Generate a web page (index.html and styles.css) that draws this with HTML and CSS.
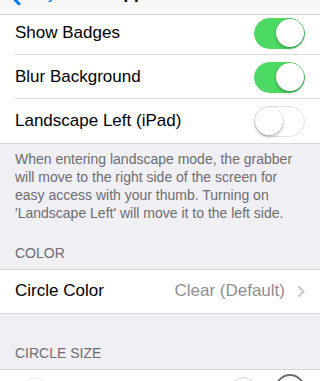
FILE: index.html
```html
<!DOCTYPE html>
<html>
<head>
<meta charset="utf-8">
<link rel="stylesheet" href="styles.css">
</head>
<body>
<div class="nav">
  <div class="back">
    <svg class="chev" width="13" height="22" viewBox="0 0 13 22"><path d="M11 1 L2 11 L11 21" fill="none" stroke="#007aff" stroke-width="3" stroke-linecap="round" stroke-linejoin="round"/></svg>
    <span>Keyboard</span>
  </div>
  <div class="title">Appearance</div>
</div>
<div class="page">
  <div class="group">
    <div class="row">
      <span class="label">Show Badges</span>
      <span class="toggle on"><span class="knob"></span></span>
    </div>
    <div class="row">
      <span class="label">Blur Background</span>
      <span class="toggle on"><span class="knob"></span></span>
    </div>
    <div class="row last">
      <span class="label">Landscape Left (iPad)</span>
      <span class="toggle"><span class="knob"></span></span>
    </div>
  </div>
  <div class="footer">When entering landscape mode, the grabber will move to the right side of the screen for easy access with your thumb. Turning on 'Landscape Left' will move it to the left side.</div>
  <div class="header first">COLOR</div>
  <div class="group">
    <div class="row last">
      <span class="label">Circle Color</span>
      <span class="detail">Clear (Default)<svg class="disc" width="8" height="13" viewBox="0 0 8 13"><path d="M1.5 1.5 L6.5 6.5 L1.5 11.5" fill="none" stroke="#c7c7cc" stroke-width="2"/></svg></span>
    </div>
  </div>
  <div class="header second">CIRCLE SIZE</div>
  <div class="group">
    <div class="row sizes">
      <span class="faint"></span>
      <span class="circles">
        <span class="circ small"></span>
        <span class="circ big"></span>
      </span>
    </div>
  </div>
</div>
</body>
</html>
```

FILE: styles.css
```css
html, body {
  margin: 0;
  padding: 0;
}
body {
  width: 320px;
  height: 381px;
  overflow: hidden;
  background: #efeff4;
  font-family: "Liberation Sans", Arial, sans-serif;
  position: relative;
}
.nav {
  position: absolute;
  left: 0;
  top: -30px;
  width: 320px;
  height: 44px;
  background: rgba(248, 248, 248, 0.98);
  border-bottom: 1px solid #cfcfd3;
  z-index: 2;
  overflow: hidden;
}
.back {
  position: absolute;
  left: 8px;
  top: 13px;
  display: flex;
  align-items: center;
  gap: 6px;
  color: #007aff;
  font-size: 17px;
}
.title {
  position: absolute;
  left: 0;
  right: 0;
  top: 14px;
  text-align: center;
  font-size: 17px;
  font-weight: bold;
  color: #000;
}
.page {
  padding-top: 11px;
}
.group {
  background: #fff;
  border-bottom: 1px solid #d6d6da;
}
.row {
  height: 44px;
  display: flex;
  align-items: center;
  justify-content: space-between;
  padding: 0 15px;
  position: relative;
  box-sizing: border-box;
}
.row::after {
  content: "";
  position: absolute;
  left: 15px;
  right: 0;
  bottom: 0;
  border-bottom: 1px solid #dcdce0;
}
.row.last::after,
.row.sizes::after {
  display: none;
}
.label {
  font-size: 17px;
  color: #000;
}
.toggle {
  width: 51px;
  height: 31px;
  border-radius: 16px;
  box-sizing: border-box;
  border: 1.5px solid #e3e3e6;
  background: #fff;
  position: relative;
  display: flex;
  align-items: center;
  justify-content: flex-start;
  padding: 0;
}
.toggle.on {
  background: #4cd964;
  border-color: #4cd964;
  justify-content: flex-end;
}
.knob {
  width: 28px;
  height: 28px;
  border-radius: 50%;
  background: #fff;
  box-shadow: 0 2px 3px rgba(0, 0, 0, 0.25), 0 0 0 0.5px rgba(0, 0, 0, 0.12);
}
.footer {
  padding: 6px 15px 0;
  font-size: 14px;
  line-height: 18px;
  color: #6d6d72;
}
.header {
  padding: 0 15px 7px;
  font-size: 14px;
  line-height: 18px;
  color: #6d6d72;
  border-bottom: 1px solid #d6d6da;
  margin-bottom: -1px;
  position: relative;
}
.header.first {
  padding-top: 22px;
}
.header.second {
  padding-top: 30px;
}
.detail {
  display: flex;
  align-items: center;
  gap: 12px;
  font-size: 17px;
  color: #8e8e93;
}
.sizes {
  align-items: flex-start;
  padding-top: 6px;
}
.faint {
  width: 24px;
  height: 24px;
  margin-left: 8px;
  margin-top: 2px;
  border-radius: 50%;
  border: 1px solid #ececef;
  box-sizing: border-box;
}
.circles {
  display: flex;
  align-items: flex-start;
  gap: 18px;
}
.circ {
  border-radius: 50%;
  box-sizing: border-box;
}
.circ.small {
  width: 27px;
  height: 27px;
  margin-top: 2px;
  border: 1px solid #d4d4d8;
}
.circ.big {
  width: 30px;
  height: 30px;
  margin-top: -1px;
  border: 2px solid #707074;
}
```
